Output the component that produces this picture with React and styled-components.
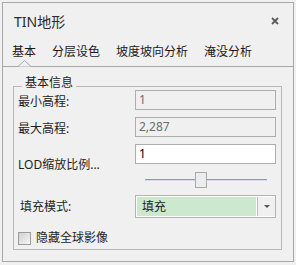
import React from "react";
import styled, { createGlobalStyle } from "styled-components";

const GlobalStyle = createGlobalStyle`
  html, body {
    margin: 0;
    padding: 0;
    background: #f0f0f0;
    font-family: "Noto Sans", "Noto Sans CJK SC", sans-serif;
    color: #1e1e1e;
  }
`;

const Panel = styled.div`
  box-sizing: border-box;
  width: 292px;
  height: 260px;
  margin: 2px;
  border: 1px solid #a8a8a8;
  background: #f0f0f0;
  display: flex;
  flex-direction: column;
`;

const Header = styled.div`
  height: 38px;
  display: flex;
  align-items: center;
  justify-content: space-between;
  padding: 0 14px 0 11px;
`;

const Title = styled.span`
  font-size: 14px;
  line-height: 18px;
  color: #2b2b2b;
`;

const Close = styled.svg`
  width: 8px;
  height: 8px;
  margin-bottom: 3px;
`;

const TabBar = styled.div`
  display: flex;
  gap: 16px;
  padding: 4px 0 7px 9px;
  border-bottom: 1px solid #a8a8a8;
`;

const Tab = styled.div`
  position: relative;
  font-size: 12px;
  line-height: 14px;
  color: #1a1a1a;
`;

const Notch = styled.svg`
  position: absolute;
  left: 50%;
  bottom: -8px;
  width: 13px;
  height: 7px;
  margin-left: -6.5px;
`;

const Body = styled.div`
  padding: 19px 11px 0 10px;
`;

const Group = styled.div`
  border: 1px solid #b8b8b8;
`;

const Legend = styled.span`
  display: table;
  margin: -11px 0 -3px 8px;
  padding: 0 3px;
  background: #f0f0f0;
  font-size: 12px;
  line-height: 14px;
`;

const Form = styled.div`
  display: grid;
  grid-template-columns: 117px 141px;
  row-gap: 7px;
  padding: 3px 4px 3px 4px;
`;

const Label = styled.div`
  font-size: 12px;
  line-height: 14px;
  white-space: nowrap;
  align-self: ${(p) => (p.$top ? "start" : "center")};
  padding-top: ${(p) => p.$offset || 0}px;
  padding-left: ${(p) => p.$indent || 0}px;
  grid-row: ${(p) => (p.$span ? "span 2" : "auto")};
`;

const Input = styled.div`
  box-sizing: border-box;
  height: 20px;
  border: 1px solid #adadad;
  background: ${(p) => (p.$disabled ? "#f0f0f0" : "#ffffff")};
  color: ${(p) => (p.$disabled ? "#6d6d6d" : "#000")};
  font-size: 12px;
  line-height: 18px;
  padding-left: 3px;
`;

const SliderRow = styled.div`
  height: 16px;
  display: flex;
  align-items: center;
  padding: 1px 9px 0 10px;
`;

const Track = styled.div`
  position: relative;
  flex: 1;
  height: 1px;
  background: #7f9acb;
  border-bottom: 1px solid #d4deee;
`;

const Thumb = styled.div`
  position: absolute;
  top: -7px;
  box-sizing: border-box;
  width: 12px;
  height: 16px;
  margin-left: -6px;
  border: 1px solid #a9a9a9;
  background: #ececec;
`;

const Combo = styled.div`
  box-sizing: border-box;
  height: 23px;
  display: flex;
  border: 1px solid #b3b3b3;
  background: #ffffff;
  padding: 1px 0 1px 1px;
`;

const ComboField = styled.div`
  flex: 1;
  background: #cce8cf;
  font-size: 12px;
  line-height: 19px;
  padding-left: 5px;
`;

const ComboButton = styled.div`
  width: 17px;
  margin-left: 1px;
  border-left: 1px solid #bcbcbc;
  background: #f0f0f0;
  display: flex;
  align-items: center;
  justify-content: center;
`;

const CheckRow = styled.label`
  grid-column: span 2;
  display: flex;
  align-items: center;
  gap: 5px;
  margin-top: 5px;
  font-size: 12px;
  line-height: 16px;
`;

const Box = styled.span`
  box-sizing: border-box;
  width: 13px;
  height: 13px;
  border: 1px solid #9c9c9c;
  background: linear-gradient(135deg, #cfcfcf, #f7f7f7);
`;

const tabs = ["基本", "分层设色", "坡度坡向分析", "淹没分析"];

export default function App() {
  const slider = 0.455;
  return (
    <>
      <GlobalStyle />
      <Panel>
        <Header>
          <Title>TIN地形</Title>
          <Close viewBox="0 0 8 8">
            <path d="M1 1L7 7M7 1L1 7" stroke="#5a5a5a" strokeWidth="1.8" />
          </Close>
        </Header>
        <TabBar>
          {tabs.map((t, i) => (
            <Tab key={t}>
              {t}
              {i === 0 && (
                <Notch viewBox="0 0 13 7">
                  <path d="M0 6.5L6.5 0.5L13 6.5Z" fill="#f0f0f0" />
                  <path d="M0 6.5L6.5 0.5L13 6.5" fill="none" stroke="#a8a8a8" />
                </Notch>
              )}
            </Tab>
          ))}
        </TabBar>
        <Body>
          <Group>
            <Legend>基本信息</Legend>
            <Form>
              <Label $offset={4}>最小高程:</Label>
              <Input $disabled>1</Input>
              <Label $offset={4}>最大高程:</Label>
              <Input $disabled>2,287</Input>
              <Label $top $span $offset={14}>LOD缩放比例...</Label>
              <Input>1</Input>
              <SliderRow>
                <Track>
                  <Thumb style={{ left: `${slider * 100}%` }} />
                </Track>
              </SliderRow>
              <Label $indent={2}>填充模式:</Label>
              <Combo>
                <ComboField>填充</ComboField>
                <ComboButton>
                  <svg width="6" height="4" viewBox="0 0 6 4">
                    <path d="M0 0H6L3 3Z" fill="#555" />
                  </svg>
                </ComboButton>
              </Combo>
              <CheckRow>
                <Box />
                隐藏全球影像
              </CheckRow>
            </Form>
          </Group>
        </Body>
      </Panel>
    </>
  );
}
